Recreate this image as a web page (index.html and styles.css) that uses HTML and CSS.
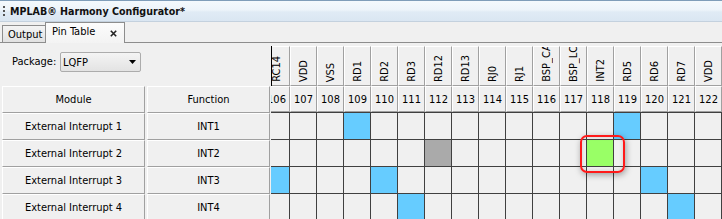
FILE: index.html
```html
<!DOCTYPE html>
<html>
<head>
<meta charset="utf-8">
<link rel="stylesheet" href="styles.css">
</head>
<body>
<div class="titlebar"><span class="grip"></span><span class="title">MPLAB® Harmony Configurator*</span></div>
<div class="tabstrip">
  <div class="tab">Output</div>
  <div class="tab active"><span>Pin Table</span><svg class="close" width="7" height="7" viewBox="0 0 7 7"><path d="M0.8 0.8L6.2 6.2M6.2 0.8L0.8 6.2" stroke="#222" stroke-width="1.6"/></svg></div>
</div>
<div class="content">
  <div class="left">
    <div class="pkg-row">
      <span class="pkg-label">Package:</span>
      <div class="combo"><span>LQFP</span><svg width="7" height="4" viewBox="0 0 7 4"><path d="M0 0H7L3.5 4Z" fill="#000"/></svg></div>
    </div>
    <div class="row head">
      <div class="lcell module">Module</div>
      <div class="lcell func">Function</div>
    </div>
    <div class="row">
      <div class="lcell module">External Interrupt 1</div>
      <div class="lcell func">INT1</div>
    </div>
    <div class="row">
      <div class="lcell module">External Interrupt 2</div>
      <div class="lcell func">INT2</div>
    </div>
    <div class="row">
      <div class="lcell module">External Interrupt 3</div>
      <div class="lcell func">INT3</div>
    </div>
    <div class="row">
      <div class="lcell module">External Interrupt 4</div>
      <div class="lcell func">INT4</div>
    </div>
  </div>
  <div class="pins">
    <div class="pins-inner">
      <div class="names">
        <div class="name"><span>RC14</span></div>
        <div class="name"><span>VDD</span></div>
        <div class="name"><span>VSS</span></div>
        <div class="name"><span>RD1</span></div>
        <div class="name"><span>RD2</span></div>
        <div class="name"><span>RD3</span></div>
        <div class="name"><span>RD12</span></div>
        <div class="name"><span>RD13</span></div>
        <div class="name"><span>RJ0</span></div>
        <div class="name"><span>RJ1</span></div>
        <div class="name"><span>BSP_CAN1_RX</span></div>
        <div class="name"><span>BSP_LCD_CS</span></div>
        <div class="name"><span>INT2</span></div>
        <div class="name"><span>RD5</span></div>
        <div class="name"><span>RD6</span></div>
        <div class="name"><span>RD7</span></div>
        <div class="name"><span>VDD</span></div>
      </div>
      <div class="nums">
        <div class="num">106</div><div class="num">107</div><div class="num">108</div><div class="num">109</div>
        <div class="num">110</div><div class="num">111</div><div class="num">112</div><div class="num">113</div>
        <div class="num">114</div><div class="num">115</div><div class="num">116</div><div class="num">117</div>
        <div class="num">118</div><div class="num">119</div><div class="num">120</div><div class="num">121</div>
        <div class="num">122</div>
      </div>
      <div class="grid">
        <div class="grow">
          <div class="cell"></div><div class="cell"></div><div class="cell"></div><div class="cell blue"></div>
          <div class="cell"></div><div class="cell"></div><div class="cell"></div><div class="cell"></div>
          <div class="cell"></div><div class="cell"></div><div class="cell"></div><div class="cell"></div>
          <div class="cell"></div><div class="cell blue"></div><div class="cell"></div><div class="cell"></div>
          <div class="cell"></div>
        </div>
        <div class="grow">
          <div class="cell"></div><div class="cell"></div><div class="cell"></div><div class="cell"></div>
          <div class="cell"></div><div class="cell"></div><div class="cell gray"></div><div class="cell"></div>
          <div class="cell"></div><div class="cell"></div><div class="cell"></div><div class="cell"></div>
          <div class="cell green"><div class="highlight"></div></div><div class="cell"></div><div class="cell"></div><div class="cell"></div>
          <div class="cell"></div>
        </div>
        <div class="grow">
          <div class="cell blue"></div><div class="cell"></div><div class="cell"></div><div class="cell"></div>
          <div class="cell blue"></div><div class="cell"></div><div class="cell"></div><div class="cell"></div>
          <div class="cell"></div><div class="cell"></div><div class="cell"></div><div class="cell"></div>
          <div class="cell"></div><div class="cell"></div><div class="cell blue"></div><div class="cell"></div>
          <div class="cell"></div>
        </div>
        <div class="grow">
          <div class="cell"></div><div class="cell"></div><div class="cell"></div><div class="cell"></div>
          <div class="cell"></div><div class="cell blue"></div><div class="cell"></div><div class="cell"></div>
          <div class="cell"></div><div class="cell"></div><div class="cell"></div><div class="cell"></div>
          <div class="cell"></div><div class="cell"></div><div class="cell"></div><div class="cell blue"></div>
          <div class="cell"></div>
        </div>
      </div>
    </div>
  </div>
</div>
</body>
</html>
```
FILE: styles.css
```css
* { box-sizing: border-box; }

html, body {
  margin: 0;
  padding: 0;
}

body {
  width: 722px;
  height: 219px;
  overflow: hidden;
  background: #f0f0f0;
  font-family: "DejaVu Sans Condensed", "Liberation Sans", sans-serif;
  font-size: 11px;
  color: #000;
}

.titlebar {
  height: 22px;
  border-top: 1px solid #7f9db9;
  border-bottom: 1px solid #c4d1de;
  background: linear-gradient(#f4f9fd 0%, #edf4fa 45%, #e0ebf5 55%, #dae6f2 100%);
  display: flex;
  align-items: center;
  padding-left: 3px;
}

.grip {
  width: 2px;
  height: 10px;
  border-left: 2px dotted #555;
  margin-right: 5px;
}

.title {
  font-weight: bold;
  font-size: 10.6px;
  color: #111;
}

.tabstrip {
  height: 21px;
  display: flex;
  align-items: flex-end;
  padding-left: 2px;
  border-bottom: 1px solid #8d8d8d;
}

.tab {
  height: 17px;
  width: 44px;
  border: 1px solid #8d8d8d;
  border-bottom: none;
  background: linear-gradient(#f4f4f4, #e1e1e1);
  padding: 2px 0 0 5px;
  line-height: 14px;
}

.tab.active {
  height: 21px;
  width: 80px;
  margin-left: -1px;
  margin-bottom: -1px;
  background: linear-gradient(#fcfcfc, #f3f3f3);
  padding: 2px 0 0 6px;
  display: flex;
  align-items: flex-start;
}

.tab.active span {
  line-height: 14px;
}

.close {
  margin-left: 15px;
  margin-top: 5px;
}

.content {
  display: flex;
}

.left {
  width: 271px;
  flex: none;
}

.pkg-row {
  height: 43px;
  display: flex;
  align-items: flex-start;
  padding: 9px 0 0 12px;
}

.pkg-label {
  width: 48px;
  line-height: 20px;
}

.combo {
  width: 81px;
  height: 20px;
  border: 1px solid #acacac;
  border-radius: 2px;
  background: linear-gradient(#f4f4f4, #e3e3e3);
  display: flex;
  align-items: center;
  justify-content: space-between;
  padding: 0 4px 0 2px;
}

.row {
  display: flex;
  height: 27px;
}

.lcell {
  background: #f0f0f0;
  border-top: 1px solid #ffffff;
  border-left: 1px solid #ffffff;
  border-right: 1px solid #a0a0a0;
  border-bottom: 1px solid #a0a0a0;
  display: flex;
  align-items: center;
  justify-content: center;
  white-space: nowrap;
}

.module {
  width: 143px;
  margin-left: 2px;
  margin-right: 2px;
}

.func {
  width: 123px;
}

.pins {
  position: relative;
  flex: 1;
  overflow: hidden;
  padding-top: 3px;
}

.pins::before {
  content: "";
  position: absolute;
  left: 0;
  top: 3px;
  width: 1px;
  height: 40px;
  background: #000;
  z-index: 1;
}

.pins-inner {
  margin-left: -8px;
  width: 459px;
}

.names, .nums, .grow {
  display: flex;
}

.name {
  flex: none;
  width: 27px;
  height: 40px;
  border-top: 1px solid #ffffff;
  border-left: 1px solid #ffffff;
  border-right: 1px solid #a0a0a0;
  border-bottom: 1px solid #a0a0a0;
  display: flex;
  flex-direction: column;
  justify-content: flex-end;
  align-items: center;
  overflow: hidden;
  padding-bottom: 3px;
}

.name span {
  writing-mode: vertical-rl;
  transform: rotate(180deg);
  white-space: nowrap;
  line-height: 11px;
}

.num {
  flex: none;
  width: 27px;
  height: 26px;
  border-top: 1px solid #ffffff;
  border-left: 1px solid #ffffff;
  border-right: 1px solid #a0a0a0;
  border-bottom: 1px solid #a0a0a0;
  display: flex;
  align-items: center;
  justify-content: center;
}

.grid {
  border-top: 1px solid #404040;
}

.cell {
  flex: none;
  width: 27px;
  height: 27px;
  border-right: 1px solid #404040;
  border-bottom: 1px solid #404040;
  background: #f0f0f0;
}

.cell.blue { background: #66ccff; }
.cell.green { background: #99ff66; position: relative; }
.cell.gray { background: #aaaaaa; }

.highlight {
  position: absolute;
  left: -7px;
  top: -5px;
  width: 45px;
  height: 38px;
  border: 2px solid #ff1a1a;
  border-radius: 7px;
  box-shadow: 1px 2px 6px rgba(0, 0, 0, 0.35), inset 0 0 4px rgba(0, 0, 0, 0.15);
  z-index: 2;
}
```
